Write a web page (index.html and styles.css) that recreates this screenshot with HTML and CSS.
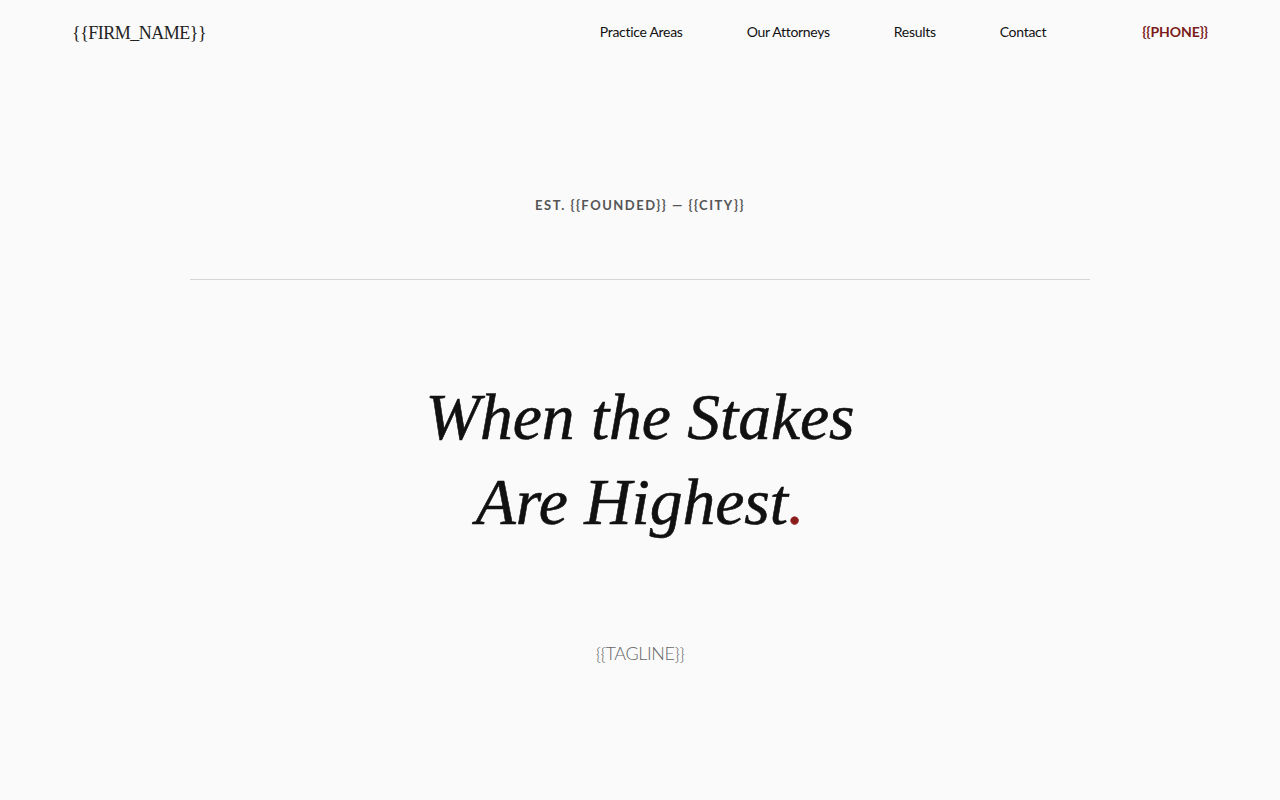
FILE: index.html
```html
<!DOCTYPE html>
<html lang="en">
<head>
<meta charset="utf-8">
<title>{{FIRM_NAME}}</title>
<link rel="stylesheet" href="styles.css">
</head>
<body>
<header class="site-header">
  <a class="brand" href="#">{{FIRM_NAME}}</a>
  <nav class="main-nav">
    <a href="#">Practice Areas</a>
    <a href="#">Our Attorneys</a>
    <a href="#">Results</a>
    <a href="#">Contact</a>
  </nav>
  <a class="phone" href="#">{{PHONE}}</a>
</header>
<main class="hero">
  <p class="eyebrow">EST. {{FOUNDED}} — {{CITY}}</p>
  <hr class="rule">
  <h1 class="headline">When the Stakes<br>Are Highest<span class="dot">.</span></h1>
  <p class="tagline">{{TAGLINE}}</p>
</main>
</body>
</html>
```
FILE: styles.css
```css
* { box-sizing: border-box; }

html, body {
  margin: 0;
  background: #fafafa;
  color: #111;
}

body {
  font-family: "Lato", "Liberation Sans", sans-serif;
  min-height: 800px;
}

a { text-decoration: none; color: inherit; }

.site-header {
  display: flex;
  align-items: center;
  height: 64px;
  padding: 0 72px;
}

.brand {
  font-family: "Liberation Serif", serif;
  font-size: 18px;
  letter-spacing: -0.5px;
  color: #222;
  margin-top: 2px;
}

.main-nav {
  margin-left: auto;
  display: flex;
  gap: 64px;
  font-size: 14px;
  letter-spacing: -0.3px;
  color: #111;
  margin-top: -1px;
}

.phone {
  margin-left: 96px;
  margin-top: -1px;
  font-size: 14px;
  letter-spacing: -0.1px;
  font-weight: 700;
  color: #7a1c1c;
}

.hero {
  display: flex;
  flex-direction: column;
  align-items: center;
}

.eyebrow {
  margin: 132px 0 0;
  font-size: 13px;
  font-weight: 700;
  letter-spacing: 1.5px;
  color: #555;
  line-height: 18px;
}

.rule {
  width: 900px;
  height: 1px;
  border: 0;
  background: #d6d6d6;
  margin: 65px 0 0;
}

.headline {
  margin: 95px 0 0;
  font-family: "Liberation Serif", serif;
  font-style: italic;
  font-weight: 400;
  font-size: 65.5px;
  line-height: 85px;
  text-align: center;
  color: #111;
  -webkit-text-stroke: 0.6px #111;
}

.dot {
  color: #8b1c1c;
  -webkit-text-stroke-color: #8b1c1c;
}

.tagline {
  margin: 96px 0 0;
  font-size: 18px;
  line-height: 24px;
  letter-spacing: -0.4px;
  font-weight: 300;
  color: #666;
}
```
